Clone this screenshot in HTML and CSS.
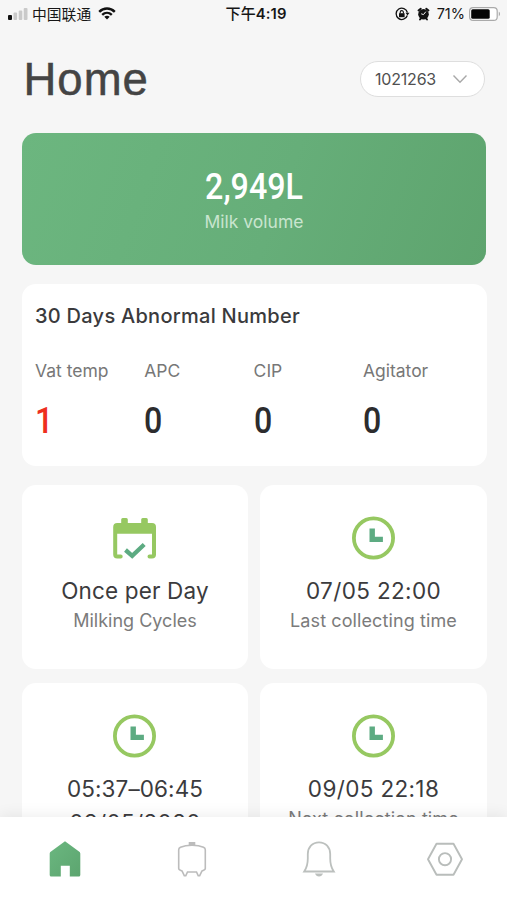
FILE: index.html
```html
<!DOCTYPE html>
<html lang="en">
<head>
<meta charset="utf-8">
<title>Home</title>
<link rel="stylesheet" href="styles.css">
</head>
<body>
<svg width="0" height="0" class="defs" aria-hidden="true">
  <defs>
    <linearGradient id="leaf" x1="0" y1="0" x2="1" y2="1"><stop offset="0" stop-color="#6bb780"/><stop offset="1" stop-color="#5ca56f"/></linearGradient>
    <symbol id="clock" viewBox="0 0 44 44">
      <circle cx="21.500" cy="22" r="19.600" fill="none" stroke="#96c861" stroke-width="3.800"/>
      <path d="M17.500 12.500h5.400v8.200h8v5.400H17.500z" fill="#5dab82"/>
    </symbol>
  </defs>
</svg>
<div class="app">
  <div class="status">
    <div class="status-left">
      <svg class="signal" width="20" height="12" viewBox="0 0 20 12"><rect x="0" y="7" width="4" height="5" rx="1" fill="#111"/><rect x="5.500" y="4.500" width="3.600" height="7.500" rx="1" fill="#c9c9c9"/><rect x="10.700" y="2.500" width="3.600" height="9.500" rx="1" fill="#c9c9c9"/><rect x="15.700" y="0" width="3.800" height="12" rx="1" fill="#c9c9c9"/></svg>
      <span class="carrier">中国联通</span>
      <svg class="wifi" width="18" height="13" viewBox="0 0 18 13" fill="none" stroke="#111" stroke-width="2.400"><path d="M1.200 4.800C5.600.4 12.400.4 16.800 4.800"/><path d="M4.200 7.800c2.800-2.600 6.800-2.600 9.600 0"/><path d="M6.300 9.800 9 12.500l2.700-2.700c-1.600-1.300-3.800-1.300-5.400 0z" fill="#111" stroke="none"/></svg>
    </div>
    <div class="clock-text"><span class="cjk">下午</span>4:19</div>
    <div class="status-right">
      <svg width="15" height="14" viewBox="0 0 15 14" fill="none" stroke="#111" stroke-width="1.300"><path d="M12.300 8.500a5.700 5.700 0 1 1 .1-3"/><path d="M10.500 5.700h4l-2 2.800z" fill="#111" stroke="none"/><rect x="4" y="6.200" width="5.600" height="4" fill="#111" stroke="none"/><path d="M5.200 6.500V5.200a1.600 1.600 0 0 1 3.200 0v1.300" stroke-width="1.100"/></svg>
      <svg class="alarm" width="13" height="14" viewBox="0 0 13 14"><circle cx="6.500" cy="7.300" r="5.300" fill="#111"/><path d="M1.500 3.500 3.700 1.700M11.500 3.500 9.300 1.700M3 12.500l1-1.300M10 12.500l-1-1.300" stroke="#111" stroke-width="1.900" stroke-linecap="round"/><path d="M8.800 4.700 6.500 7.600 4.200 6.800" fill="none" stroke="#eee" stroke-width="1"/></svg>
      <span class="percent">71%</span>
      <svg class="battery" width="32" height="14" viewBox="0 0 32 14"><rect x=".6" y=".6" width="27.600" height="12.800" rx="3.500" fill="#fff" stroke="#aaa" stroke-width="1.200"/><rect x="2.200" y="2.200" width="18.500" height="9.600" rx="1.500" fill="#050505"/><path d="M29.800 4.800c1.600.6 1.600 3.800 0 4.400z" fill="#aaa"/></svg>
    </div>
  </div>
  <main>
    <header class="head">
      <h1>Home</h1>
      <div class="picker"><span>1021263</span><svg width="16" height="10" viewBox="0 0 16 10"><path d="M1.500 1.500 8 8.200l6.500-6.700" fill="none" stroke="#a8a8a8" stroke-width="1.400"/></svg></div>
    </header>
    <section class="volume">
      <strong class="din">2,949L</strong>
      <span>Milk volume</span>
    </section>
    <section class="abnormal">
      <h2>30 Days Abnormal Number</h2>
      <div class="stats">
        <div><span>Vat temp</span><b class="din alert">1</b></div>
        <div><span>APC</span><b class="din">0</b></div>
        <div><span>CIP</span><b class="din">0</b></div>
        <div><span>Agitator</span><b class="din">0</b></div>
      </div>
    </section>
    <section class="tiles">
      <article class="tile">
        <svg width="44" height="44" viewBox="0 0 44 44"><path d="M4.500 7h3.700V3.500A1.500 1.500 0 0 1 9.700 2h3.600a1.500 1.500 0 0 1 1.500 1.500V7h13.400V3.500A1.500 1.500 0 0 1 29.700 2h3.600a1.500 1.500 0 0 1 1.500 1.500V7h4.200A4 4 0 0 1 43 11v27.500a4 4 0 0 1-4 4h-2.500a2 2 0 0 1 0-4h2.500V17.700H4.200v20.800h3.500a2 2 0 0 1 0 4H4.200a4 4 0 0 1-4-4V11a4 4 0 0 1 4-4z" fill="#96c861"/><path d="m12.500 34 6.700 5.800 12-11.300" fill="none" stroke="#5dab82" stroke-width="4.300"/></svg>
        <p class="value once">Once per Day</p>
        <p class="label cycles">Milking Cycles</p>
      </article>
      <article class="tile">
        <svg width="44" height="44"><use href="#clock"/></svg>
        <p class="value">07/05 22:00</p>
        <p class="label">Last collecting time</p>
      </article>
      <article class="tile">
        <svg width="44" height="44"><use href="#clock"/></svg>
        <p class="value span">05:37–06:45</p>
        <p class="value date">08/05/2020</p>
      </article>
      <article class="tile">
        <svg width="44" height="44"><use href="#clock"/></svg>
        <p class="value">09/05 22:18</p>
        <p class="label">Next collection time</p>
      </article>
    </section>
  </main>
  <nav>
    <a><svg width="36" height="40" viewBox="0 0 36 40"><path d="M18 2.200 32 12.500a2.500 2.500 0 0 1 1.300 2V36a1.500 1.500 0 0 1-1.500 1.500h-9V26.700h-9v10.800H4.200A1.500 1.500 0 0 1 2.700 36V14.500A2.500 2.500 0 0 1 4 12.500z" fill="url(#leaf)"/></svg></a>
    <a><svg width="36" height="40" viewBox="0 0 36 40" fill="none" stroke="#bcbcbc" stroke-width="1.600"><path d="M15.500 3.700h5v1.800h-5z" fill="#bcbcbc"/><path d="M18 6.300c-4.500 0-8.600.7-11.500 2-1.200.6-1.800 1.200-1.800 2.400v18.800c0 1 .8 1.600 3.300 2.500l2.300 4.700h1.500l1.700-3.700h9l1.700 3.700h1.500L28 32c2.500-.9 3.300-1.500 3.300-2.500V10.700c0-1.200-.6-1.800-1.800-2.400-2.900-1.300-7-2-11.500-2z"/></svg></a>
    <a><svg width="36" height="40" viewBox="0 0 36 40" fill="none" stroke="#bcc0be" stroke-width="1.800"><path d="M3.200 32.500c2.800-4 3.600-7.500 3.600-13V15c0-6.700 4.500-11.700 11.200-11.700S29.200 8.300 29.200 15v4.500c0 5.500.8 9 3.600 13z"/><path d="M14 34.500h8c-.8 2-2 2.900-4 2.900s-3.200-.9-4-2.900z" fill="#bcc0be" stroke="none"/></svg></a>
    <a><svg width="38" height="40" viewBox="0 0 38 40" fill="none" stroke="#b9bdbb" stroke-width="1.900"><path d="M10.500 4.700h17L36 20.200l-8.500 15.500h-17L2 20.200z" stroke-linejoin="round"/><circle cx="19" cy="20.200" r="6.100"/></svg></a>
  </nav>
</div>
</body>
</html>
```
FILE: styles.css
```css
* { box-sizing: border-box; }
body {
  margin: 0;
  background: #f6f6f6;
  font-family: Inter, "Liberation Sans", "Noto Sans CJK SC", sans-serif;
  color: #3b3b3d;
}
h1, h2, p { margin: 0; font-weight: 400; }
svg { display: block; flex: none; }
.defs { position: absolute; }
.app {
  height: 900px;
  display: flex;
  flex-direction: column;
  overflow: hidden;
}
.status {
  flex: none;
  height: 28px;
  display: grid;
  grid-template-columns: 1fr auto 1fr;
  align-items: center;
  padding: 0 6px 2px 8px;
  color: #161616;
  font-size: 15px;
  line-height: 26px;
}
.status-left, .status-right { display: flex; align-items: center; }
.status-right { justify-content: flex-end; }
.carrier { margin-left: 4px; font-family: "Noto Sans CJK SC", sans-serif; font-size: 14.8px; }
.wifi { margin-left: 7px; }
.clock-text { margin-left: 3px; font: 600 14.8px/26px Inter, sans-serif; letter-spacing: .1px; }
.cjk { font-family: "Noto Sans CJK SC", sans-serif; font-weight: 500; font-size: 15px; }
.alarm { margin-left: 7px; }
.percent { margin-left: 7px; font: 400 14.500px/26px Inter, sans-serif; }
.battery { margin-left: 4px; }
main {
  flex: 1;
  min-height: 0;
  overflow: hidden;
  padding: 0 20px 0 22px;
}
.head {
  height: 105px;
  display: flex;
  justify-content: space-between;
  align-items: flex-start;
  padding: 26px 2px 0 1.500px;
}
h1 {
  font-family: "Liberation Sans", sans-serif;
  font-size: 45.500px;
  line-height: 52px;
  letter-spacing: 1px;
  color: #444;
  -webkit-text-stroke: .5px #444;
}
.picker {
  width: 125px;
  height: 36px;
  margin-top: 7px;
  padding: 0 16px 0 14px;
  display: flex;
  align-items: center;
  justify-content: space-between;
  border: 1px solid #dedede;
  border-radius: 18px;
  background: #fff;
  font-size: 16px;
  letter-spacing: -.2px;
  color: #505050;
}
.din {
  display: block;
  font-family: Roboto, sans-serif;
  font-weight: 500;
  font-size: 37px;
  line-height: 44px;
  transform: scaleX(.87);
}
.volume {
  height: 132px;
  width: 464px;
  padding-top: 32px;
  border-radius: 14px;
  background: linear-gradient(110deg, #6cb67f, #66ae79 55%, #5ea46e);
  color: #fff;
  text-align: center;
}
.volume span {
  display: block;
  margin-top: 2px;
  font-size: 17.500px;
  line-height: 22px;
  color: #c9e5cf;
}
.abnormal {
  height: 182px;
  margin-top: 19px;
  padding: 20px 0 0 13px;
  border-radius: 14px;
  background: #fff;
}
h2 {
  font-weight: 500;
  font-size: 20px;
  line-height: 25px;
  letter-spacing: .27px;
  color: #3a3a3c;
}
.stats {
  display: grid;
  grid-template-columns: repeat(4, 109.300px);
  margin-top: 31px;
}
.stats span { display: block; font-size: 17.500px; line-height: 22px; color: #777; }
.stats .din { margin-top: 17px; transform-origin: left; color: #2c2c2e; }
.stats .alert { color: #ee2f1e; }
.tiles {
  display: grid;
  grid-template-columns: 226px 227px;
  grid-auto-rows: 184px;
  gap: 14px 12px;
  margin-top: 19px;
}
.tile {
  display: flex;
  flex-direction: column;
  align-items: center;
  padding-top: 31px;
  border-radius: 14px;
  background: #fff;
}
.value { margin-top: 17px; font-size: 22.500px; line-height: 28px; letter-spacing: .35px; white-space: nowrap; }
.once { letter-spacing: .15px; }
.span { letter-spacing: .1px; }
.date { margin-top: 6px; }
.label { margin-top: 5px; font-size: 18px; line-height: 22px; letter-spacing: .1px; color: #7b7b7b; white-space: nowrap; }
.cycles { letter-spacing: 0; }
nav {
  position: relative;
  flex: none;
  height: 83px;
  display: grid;
  grid-template-columns: repeat(4, 126.700px);
  padding: 22px 0 0 2px;
  background: #fff;
  box-shadow: 0 -2px 14px rgba(0, 0, 0, .07);
}
nav a { display: flex; justify-content: center; align-items: flex-start; }
```
